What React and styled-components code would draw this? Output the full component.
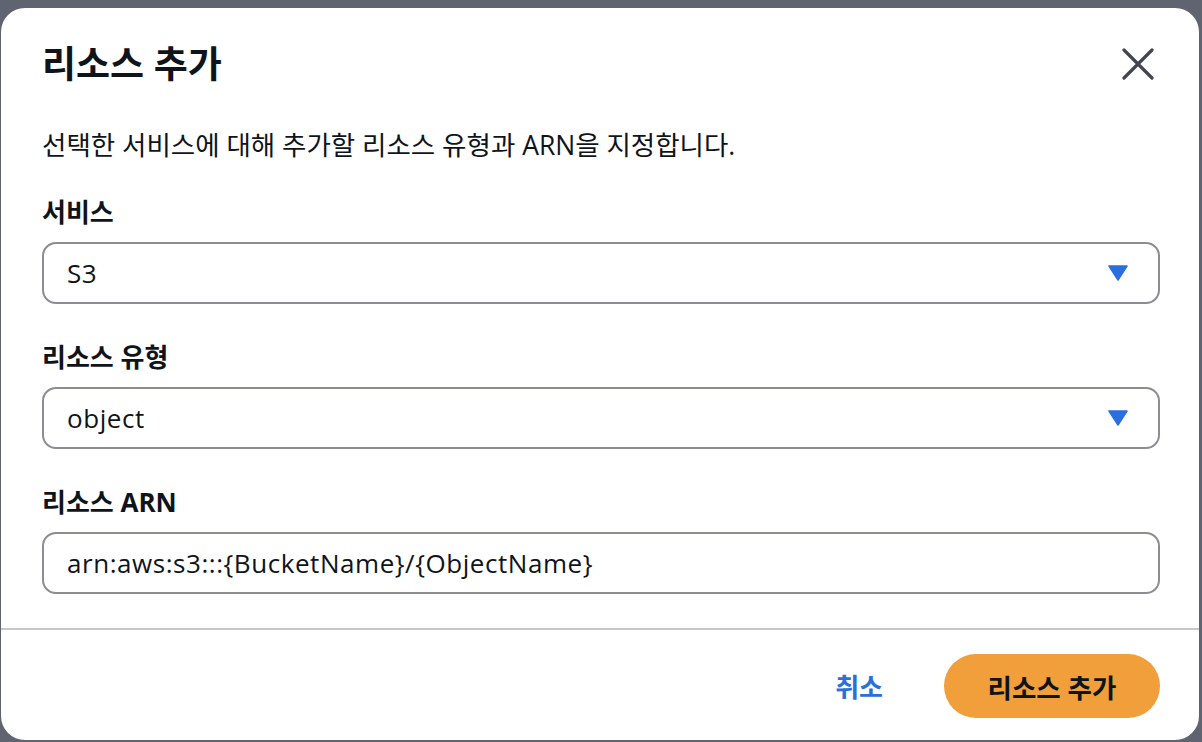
import React from 'react'
import styled, { createGlobalStyle } from 'styled-components'

const Global = createGlobalStyle`
  html, body {
    margin: 0;
    padding: 0;
    background: #5f6470;
  }
  body {
    font-family: "Open Sans", "Noto Sans CJK KR", sans-serif;
    color: #0f141a;
  }
`

const Backdrop = styled.div`
  width: 1202px;
  height: 742px;
  padding-top: 8px;
  padding-left: 1px;
  box-sizing: border-box;
`

const Dialog = styled.div`
  width: 1198px;
  height: 732px;
  background: #ffffff;
  border-radius: 24px;
  display: flex;
  flex-direction: column;
  overflow: hidden;
`

const Header = styled.div`
  display: flex;
  align-items: center;
  justify-content: space-between;
  padding: 34px 39px 0 41px;
`

const Title = styled.h2`
  margin: 0;
  font-size: 37px;
  line-height: 44px;
  font-weight: 700;
`

const CloseButton = styled.button`
  border: none;
  background: none;
  padding: 0;
  margin-right: 6px;
  width: 32px;
  height: 32px;
  display: flex;
  cursor: pointer;
`

const Body = styled.div`
  padding: 43px 39px 34px 41px;
  flex: 1;
`

const Description = styled.p`
  margin: 0 0 35px;
  font-size: 26.5px;
  line-height: 32px;
`

const Field = styled.div`
  margin-bottom: ${p => (p.last ? '0' : '37px')};
`

const Label = styled.div`
  font-size: 26px;
  line-height: 32px;
  font-weight: 700;
  margin-bottom: 14px;
`

const Box = styled.div`
  height: 62px;
  box-sizing: border-box;
  border: 2px solid #8c8c94;
  border-radius: 14px;
  display: flex;
  align-items: center;
  justify-content: space-between;
  padding: 0 30px 0 23px;
  font-size: 26px;
  letter-spacing: 0.55px;
`

const Footer = styled.div`
  border-top: 2px solid #c6c6cd;
  padding: 24px 39px 24px 41px;
  display: flex;
  justify-content: flex-end;
  align-items: center;
  gap: 61px;
`

const LinkButton = styled.button`
  border: none;
  background: none;
  padding: 0;
  font-family: inherit;
  font-size: 26px;
  font-weight: 700;
  color: #2a6fdf;
  cursor: pointer;
`

const PrimaryButton = styled.button`
  border: none;
  background: #f09f3a;
  border-radius: 32px;
  height: 64px;
  width: 216px;
  font-family: inherit;
  font-size: 26.5px;
  font-weight: 700;
  color: #0f141a;
  cursor: pointer;
`

const Caret = () => (
  <svg width="20" height="16" viewBox="0 0 20 16">
    <path d="M1 1 H19 L10 15 Z" fill="#2a6fdf" stroke="#2a6fdf" strokeWidth="1.5" strokeLinejoin="round" />
  </svg>
)

const Select = ({ value }) => (
  <Box>
    <span>{value}</span>
    <Caret />
  </Box>
)

export default function App() {
  return (
    <>
      <Global />
      <Backdrop>
        <Dialog>
          <Header>
            <Title>리소스 추가</Title>
            <CloseButton aria-label="닫기">
              <svg width="32" height="32" viewBox="0 0 32 32">
                <path d="M2 2 L30 30 M30 2 L2 30" stroke="#424650" strokeWidth="3.2" strokeLinecap="round" />
              </svg>
            </CloseButton>
          </Header>
          <Body>
            <Description>선택한 서비스에 대해 추가할 리소스 유형과 ARN을 지정합니다.</Description>
            <Field>
              <Label>서비스</Label>
              <Select value="S3" />
            </Field>
            <Field>
              <Label>리소스 유형</Label>
              <Select value="object" />
            </Field>
            <Field last>
              <Label>리소스 ARN</Label>
              <Box>arn:aws:s3:::{'{BucketName}'}/{'{ObjectName}'}</Box>
            </Field>
          </Body>
          <Footer>
            <LinkButton>취소</LinkButton>
            <PrimaryButton>리소스 추가</PrimaryButton>
          </Footer>
        </Dialog>
      </Backdrop>
    </>
  )
}
